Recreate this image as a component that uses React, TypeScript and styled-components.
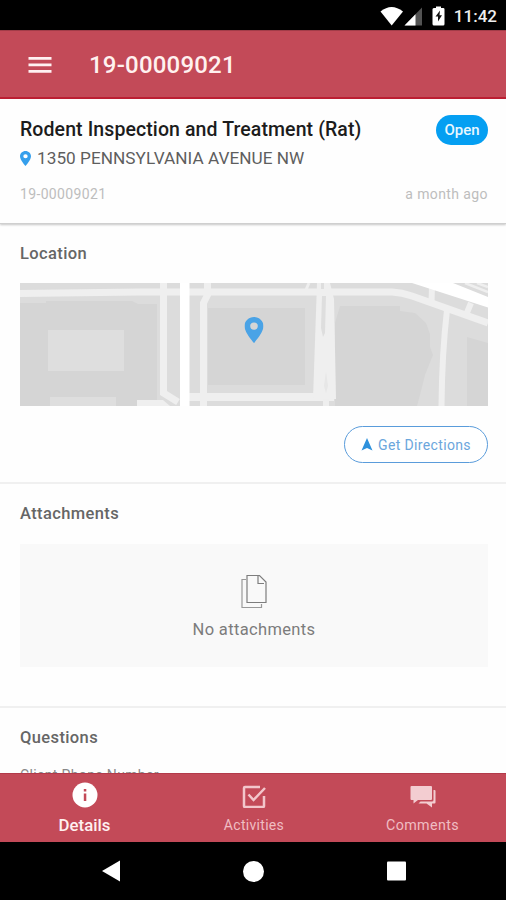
import React from "react";
import styled, { createGlobalStyle } from "styled-components";

const brand = "#c34a58";
const blue = "#4aa3e6";

const GlobalStyle = createGlobalStyle`
  * { box-sizing: border-box; }
  body { margin: 0; background: #fff; font-family: Roboto, "Liberation Sans", sans-serif; }
  svg { display: block; flex: none; }
`;

const Screen = styled.div`
  width: 506px;
  height: 900px;
  display: flex;
  flex-direction: column;
  overflow: hidden;
  background: #fefefe;
`;

const Text = styled.span<{ $size: number; $color: string; $weight?: number; $spacing?: number }>`
  font-size: ${(p) => p.$size}px;
  line-height: 24px;
  color: ${(p) => p.$color};
  font-weight: ${(p) => p.$weight ?? 400};
  letter-spacing: ${(p) => p.$spacing ?? 0}px;
  white-space: nowrap;
`;

const StatusBar = styled.div`
  height: 30px;
  flex: none;
  display: flex;
  align-items: center;
  justify-content: flex-end;
  padding: 2px 9px 0 0;
  background: #000;
`;

const ClockText = styled(Text)`
  margin-left: 8px;
`;

const AppBar = styled.header`
  height: 69px;
  flex: none;
  display: flex;
  align-items: center;
  gap: 37px;
  padding: 1px 28px 0;
  background: ${brand};
  border-top: 1px solid #a23c48;
  border-bottom: 2px solid #bd1f33;
`;

const Summary = styled.section`
  height: 125px;
  flex: none;
  padding: 16px 18px 0 20px;
  border-bottom: 1px solid #cfcfcf;
  box-shadow: 0 1px 2px rgba(0, 0, 0, 0.22);
  z-index: 1;
`;

const Row = styled.div<{ $top?: number }>`
  display: flex;
  align-items: center;
  justify-content: space-between;
  margin-top: ${(p) => p.$top ?? 0}px;
`;

const Address = styled.div`
  display: flex;
  align-items: center;
  gap: 6px;
  margin-top: 1px;
`;

const Badge = styled.span`
  width: 52px;
  height: 30px;
  flex: none;
  display: flex;
  align-items: center;
  justify-content: center;
  border-radius: 15px;
  background: #059ff2;
`;

const Content = styled.main`
  flex: 1;
  min-height: 0;
  overflow: hidden;
`;

const Section = styled.section<{ $height: number }>`
  height: ${(p) => p.$height}px;
  padding: 18px 18px 0 20px;
  border-bottom: 2px solid #f0f0f0;
  display: flex;
  flex-direction: column;
`;

const MapFrame = styled.div`
  height: 123px;
  margin-top: 17px;
`;

const DirectionsButton = styled.button`
  align-self: flex-end;
  width: 144px;
  height: 37px;
  margin-top: 20px;
  padding: 0;
  display: flex;
  align-items: center;
  justify-content: center;
  gap: 5px;
  border: 1px solid #5a9cdb;
  border-radius: 19px;
  background: #fff;
  font-family: inherit;
`;

const EmptyBox = styled.div`
  height: 123px;
  margin-top: 18px;
  padding-top: 30px;
  display: flex;
  flex-direction: column;
  align-items: center;
  gap: 9px;
  background: #f9f9f9;
`;

const Question = styled.div`
  margin-top: 13px;
`;

const TabBar = styled.nav`
  height: 69px;
  flex: none;
  display: grid;
  grid-template-columns: 169px 170px 167px;
  background: ${brand};
  border-top: 1px solid #b33a4a;
`;

const Tab = styled.div`
  display: flex;
  flex-direction: column;
  align-items: center;
  padding-top: 8px;
  gap: 5px;
`;

const NavBar = styled.div`
  height: 58px;
  flex: none;
  display: flex;
  align-items: center;
  padding-left: 102px;
  gap: 123px;
  background: #000;
`;

function StatusIcons() {
  return (
    <svg width="66" height="20" viewBox="380 5 66 20">
      <path d="M380.500 10.500Q391.500 1.500 403 10.500L391.700 24.500Z" fill="#fff" />
      <path d="M422 6.500V24.500H404.500Z" fill="#525252" />
      <path d="M415.500 13.200V24.500H404.500Z" fill="#fff" />
      <path d="M434.500 7H436V5.500H441V7H443.200Q444.500 7 444.500 8.300V23Q444.500 24.500 443.200 24.500H434Q432.500 24.500 432.500 23V8.300Q432.500 7 434.500 7Z" fill="#fff" />
      <path d="M440 9.500L435.500 15.500H438V20.500L442 14.200H439.500Z" fill="#111" />
    </svg>
  );
}

function Pin({ width, height, color }: { width: number; height: number; color: string }) {
  return (
    <svg width={width} height={height} viewBox="5 2 14 20" preserveAspectRatio="none">
      <path fill={color} d="M12 2C8.130 2 5 5.130 5 9c0 5.250 7 13 7 13s7-7.750 7-13c0-3.870-3.130-7-7-7zm0 9.800a2.800 2.800 0 1 1 0-5.600 2.800 2.800 0 0 1 0 5.600z" />
    </svg>
  );
}

function StreetMap() {
  return (
    <svg width="468" height="123" viewBox="0 0 468 123">
      <rect width="468" height="123" fill="#dcdcdc" />
      <path d="M4 20H26V18H112L118 21H137V123H0V20Z" fill="#d5d5d5" />
      <path d="M28 47H104V88H28ZM30 114H96V123H30Z" fill="#dedede" />
      <path d="M188 25H285V102H188Z" fill="#d5d5d5" />
      <path d="M320 23H380V28L395 30L406 40L410 51V64L413 72L405 92L401 108L397 123H315V40Z" fill="#d5d5d5" />
      <path d="M447 54L468 60V123H447Z" fill="#d5d5d5" />
      <g fill="none" stroke="#efefef">
        <path d="M0 10.500L120 9H372Q382 9.500 392 13L468 40" strokeWidth="7" />
        <path d="M143.500 0V110L158 119" strokeWidth="7" />
        <path d="M187.500 0V12L183.500 20V123" strokeWidth="7" />
        <path d="M169 114H314" strokeWidth="8" />
        <path d="M427 27Q422 70 421.500 123" strokeWidth="6" />
        <path d="M412 3L411.500 20M451 20L446 32" strokeWidth="6" />
        <path d="M289 0L285 9" strokeWidth="3" />
      </g>
      <path d="M117 117H143L150 123H117Z" fill="#efefef" />
      <path d="M297 0H310L314 16L316 116H293Z" fill="#efefef" />
      <path d="M302 13H306L305 50L303 54L301 45ZM301 0H304V6H301Z" fill="#dedede" />
      <path d="M306 88L308 103L306 110L304 103Z" fill="#e7e7e7" />
      <path d="M303 116H309V123H303Z" fill="#eee" />
      <path d="M160 0H169.500V123H160ZM392 0H433L468 14V24.500Z" fill="#fff" />
      <path d="M445 0L468 9M457 0L468 4" stroke="#efefef" strokeWidth="2.500" />
      <g transform="translate(224.500 34)">
        <Pin width={19} height={26} color={blue} />
      </g>
    </svg>
  );
}

function Heading({ children }: { children: string }) {
  return <Text $size={16.5} $color="#666" $weight={500} $spacing={0.38}>{children}</Text>;
}

export default function App() {
  return (
    <Screen>
      <GlobalStyle />
      <StatusBar>
        <StatusIcons />
        <ClockText $size={17} $color="#eee" $weight={500}>11:42</ClockText>
      </StatusBar>
      <AppBar>
        <svg width="24" height="18" viewBox="0 0 24 18">
          <path d="M0.500 2.300H23.500M0.500 8.800H23.500M0.500 15.300H23.500" stroke="#fff1f2" strokeWidth="2.800" />
        </svg>
        <Text $size={24} $color="#fff1ef" $weight={500} $spacing={0.2}>19-00009021</Text>
      </AppBar>
      <Summary>
        <Row>
          <Text $size={19.5} $color="#1c1c1c" $weight={500} $spacing={0.1}>Rodent Inspection and Treatment (Rat)</Text>
          <Badge><Text $size={15} $color="#e9f7ff" $weight={500}>Open</Text></Badge>
        </Row>
        <Address>
          <Pin width={11} height={15} color="#359fec" />
          <Text $size={17.2} $color="#5e5e5e" $spacing={0.03}>1350 PENNSYLVANIA AVENUE NW</Text>
        </Address>
        <Row $top={12}>
          <Text $size={14} $color="#bdbdbd" $spacing={0.35}>19-00009021</Text>
          <Text $size={14} $color="#bdbdbd" $spacing={0.4}>a month ago</Text>
        </Row>
      </Summary>
      <Content>
        <Section $height={260}>
          <Heading>Location</Heading>
          <MapFrame><StreetMap /></MapFrame>
          <DirectionsButton>
            <svg width="12" height="13" viewBox="0 0 12 13"><path d="M6 0L11.500 12.500L6 10L0.500 12.500Z" fill="#2e91dc" /></svg>
            <Text $size={14} $color="#6ba6dc" $spacing={0.35}>Get Directions</Text>
          </DirectionsButton>
        </Section>
        <Section $height={224}>
          <Heading>Attachments</Heading>
          <EmptyBox>
            <svg width="28" height="35" viewBox="0 0 28 35" fill="none" stroke="#7d7d7d" strokeWidth="1.200">
              <path d="M7 1.500H19.500L26 8V28.500H7ZM18 1.500V9.500H24" />
              <path d="M6 5.500H2V33.500H21.500V30" stroke="#999" />
            </svg>
            <Text $size={16.5} $color="#7c7c7c" $spacing={0.35}>No attachments</Text>
          </EmptyBox>
        </Section>
        <Section $height={120}>
          <Heading>Questions</Heading>
          <Question><Text $size={14} $color="#888" $spacing={0.35}>Client Phone Number</Text></Question>
        </Section>
      </Content>
      <TabBar>
        <Tab>
          <svg width="26" height="26" viewBox="0 0 26 26"><circle cx="13" cy="13" r="12.500" fill="#fff" /><path d="M11.800 7H14.300V9.500H11.800ZM11.800 11.500H14.300V19H11.800Z" fill={brand} /></svg>
          <Text $size={16.8} $color="#fff0f0" $weight={500}>Details</Text>
        </Tab>
        <Tab>
          <svg width="26" height="26" viewBox="0 0 26 26" fill="none" stroke="#f3c6cb" strokeWidth="2.500"><path d="M19 5H4Q3 5 3 6V24Q3 25 4 25H22Q23 25 23 24V14" /><path d="M7.500 12.500L12.500 18L24 6" /></svg>
          <Text $size={14} $color="#f0bdc3" $spacing={0.3}>Activities</Text>
        </Tab>
        <Tab>
          <svg width="26" height="26" viewBox="0 0 26 26" fill="#f3cdd1"><path d="M1.500 4H21Q22 4 22 5V17Q22 18 21 18H8L3.500 21.500V18H1.500Q.5 18 .5 17V5Q.5 4 1.500 4Z" /><path d="M23.500 8H24.500Q25.500 8 25.500 9V20.500Q25.500 21.500 24.500 21.500H22V25.500L16.500 21.500H8.500L10.500 19.500H22Q23.500 19.500 23.500 18Z" /></svg>
          <Text $size={14.3} $color="#f0bdc3" $spacing={0.35}>Comments</Text>
        </Tab>
      </TabBar>
      <NavBar>
        <svg width="18" height="22" viewBox="0 0 18 22"><path d="M18 0.500V21.500L0 11Z" fill="#fff" /></svg>
        <svg width="21" height="21" viewBox="0 0 21 21"><circle cx="10.500" cy="10.500" r="10.500" fill="#fff" /></svg>
        <svg width="19" height="20" viewBox="0 0 19 20"><rect width="19" height="19" y="0.500" rx="1" fill="#fff" /></svg>
      </NavBar>
    </Screen>
  );
}
